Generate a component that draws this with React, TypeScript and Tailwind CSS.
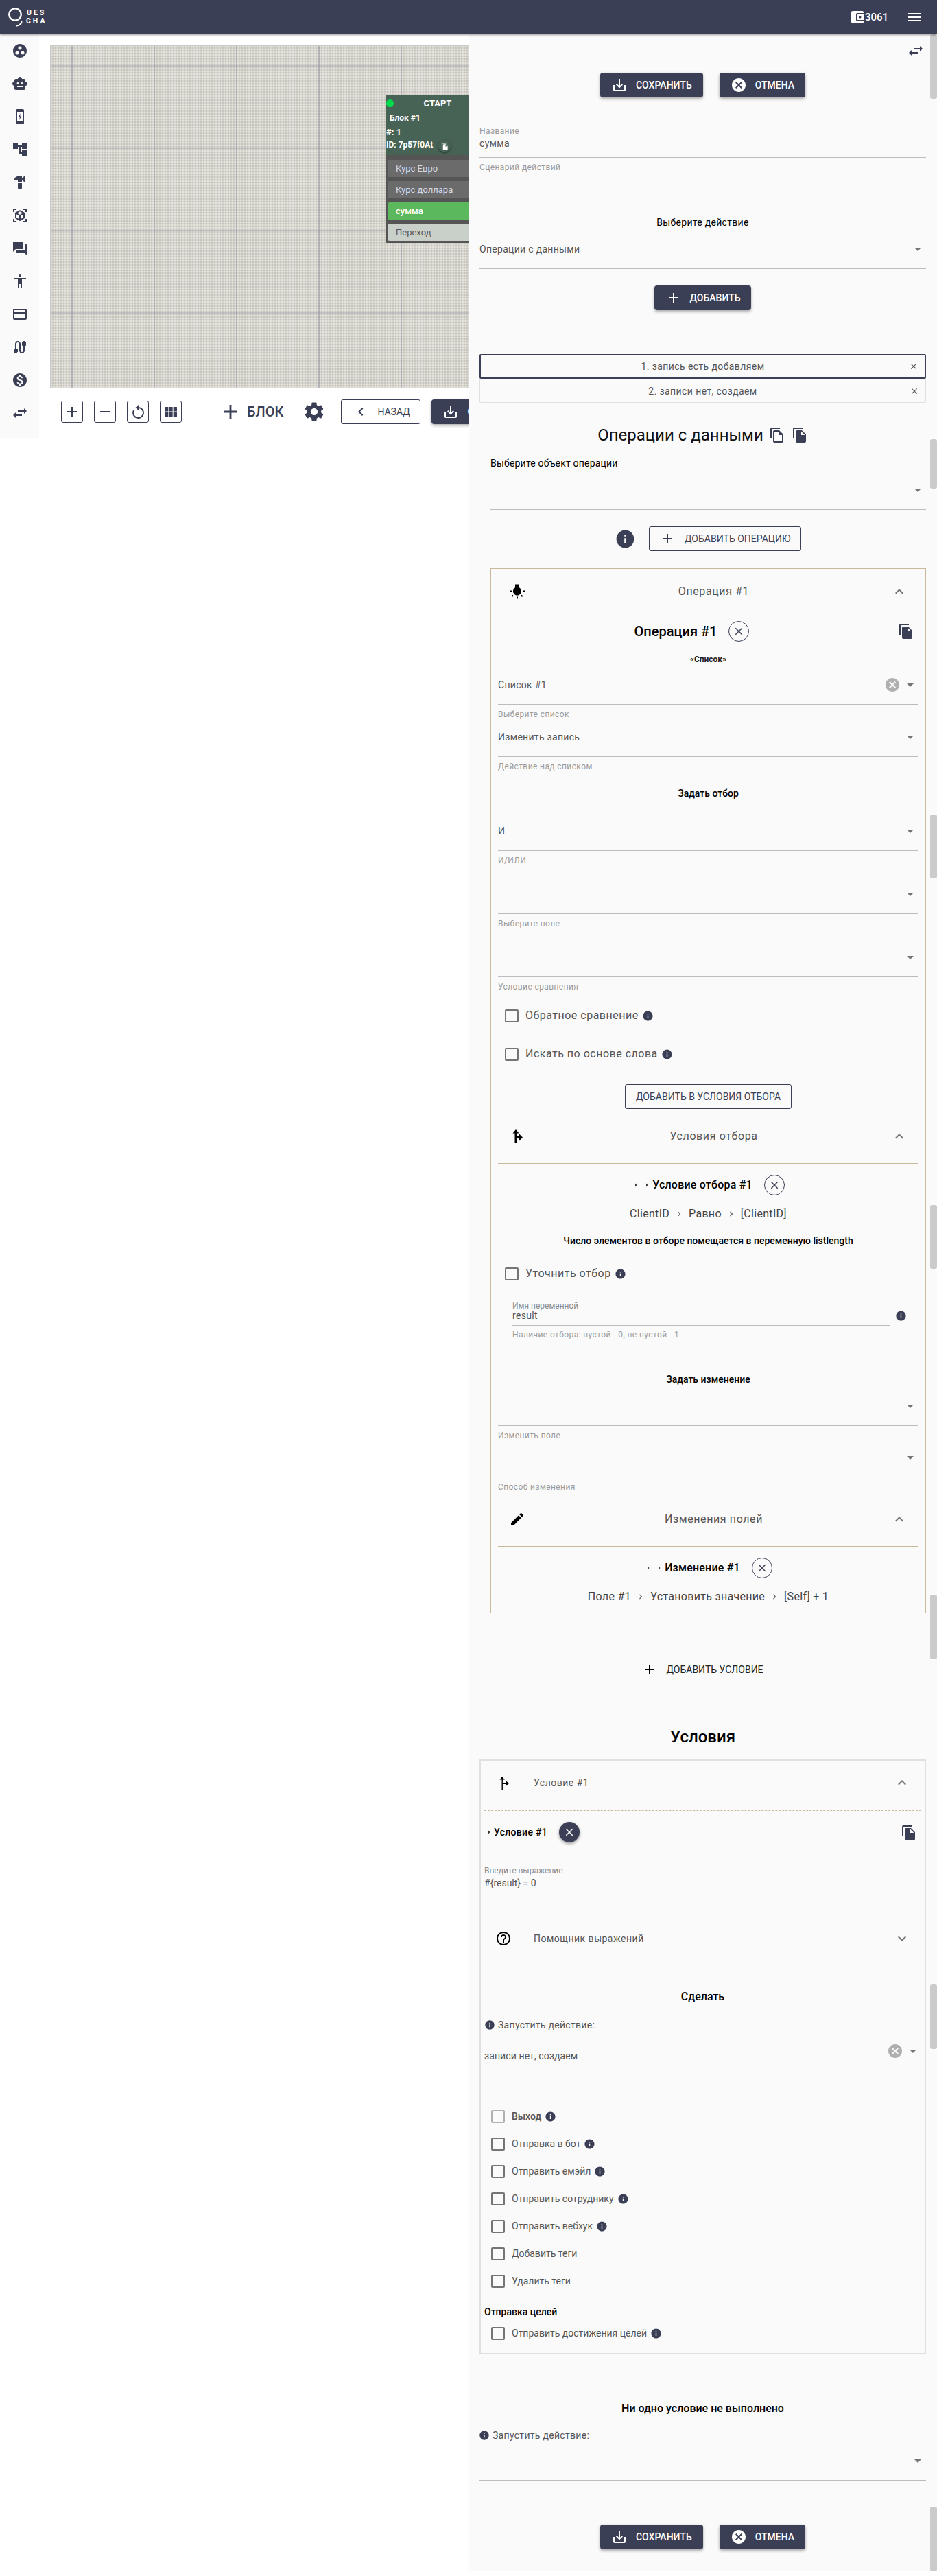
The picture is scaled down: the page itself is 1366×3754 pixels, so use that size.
import React from 'react';
import {
  MdAccessibility, MdAccountBalanceWallet, MdAccountTree, MdAdd, MdArrowDropDown, MdArrowRight, MdCable, MdCancel,
  MdChevronLeft, MdClose, MdCreditCard, MdEdit, MdExpandLess, MdExpandMore, MdFileCopy,
  MdForum, MdGroupWork, MdHardware, MdHelpOutline, MdInfo, MdKeyboardArrowRight, MdMenu, MdMonetizationOn,
  MdOutlineFileCopy, MdRemove, MdSaveAlt, MdSettings, MdSmartToy, MdViewInAr, MdViewModule, MdWbIncandescent
} from 'react-icons/md';

const ChargeIcon = () => (
  <svg width="24" height="24" viewBox="0 0 24 24" fill="#3b3f56">
    <path d="M8 1h8a2 2 0 0 1 2 2v18a2 2 0 0 1-2 2H8a2 2 0 0 1-2-2V3a2 2 0 0 1 2-2z" />
    <rect x="8" y="5" width="8" height="14" fill="#fff" />
    <path d="M12.8 7l-3 5.6h2l-.6 4.4 3-5.8h-2z" />
  </svg>
);

const SwapIcon = () => (
  <svg width="24" height="24" viewBox="0 0 24 24" fill="currentColor">
    <path d="M9 8h9V5l4 4-4 4v-3H9z" />
    <path d="M15 14H6v-3l-4 4 4 4v-3h9z" />
  </svg>
);

const ForkIcon = ({ thin }: { thin?: boolean }) => (
  <svg width="24" height="24" viewBox="0 0 24 24" fill="currentColor">
    <path d={thin ? 'M10 3L6.5 7.5h3V22h1.4v-8H16v2.5l4-3.5-4-3.5V12h-5.1V7.5h3z' : 'M10 2L5.5 7.5h3V22h2.6v-7H15v3.5l5-5-5-5V12h-3.9V7.5h3.4z'} />
  </svg>
);

const RotateIcon = () => (
  <svg width="24" height="24" viewBox="0 0 24 24" fill="none" stroke="currentColor" strokeWidth="2">
    <path d="M12.5 6a7.5 7.5 0 1 1-6.6 4" />
    <path d="M13.5 1.5L8.5 6l5 4.5z" fill="currentColor" stroke="none" />
  </svg>
);

const sideIcons = [
  <MdGroupWork size={24} />, <MdSmartToy size={24} />, <ChargeIcon />, <MdAccountTree size={24} />,
  <MdHardware size={24} />, <MdViewInAr size={24} />, <MdForum size={24} />, <MdAccessibility size={24} />,
  <MdCreditCard size={24} />, <MdCable size={24} />, <MdMonetizationOn size={24} />, <SwapIcon />
];

const Btn = ({ icon, children, cls = '' }: { icon?: React.ReactNode; children: React.ReactNode; cls?: string }) => (
  <button className={`h-9 shrink-0 rounded-[4px] bg-[#3b3f56] text-white flex items-center gap-3 px-4 text-sm font-medium uppercase shadow-[0_2px_4px_rgba(0,0,0,0.35)] ${cls}`}>
    {icon}
    <span>{children}</span>
  </button>
);

const SaveCancel = ({ cls = '' }: { cls?: string }) => (
  <div className={`flex justify-center gap-6 ${cls}`}>
    <Btn icon={<MdSaveAlt size={24} />}>Сохранить</Btn>
    <Btn icon={<MdCancel size={24} />}>Отмена</Btn>
  </div>
);

const Caption = ({ children, cls = '' }: { children: React.ReactNode; cls?: string }) => (
  <div className={`text-xs leading-[14px] tracking-[0.4px] text-[#9a9a9a] ${cls}`}>{children}</div>
);

const Select = ({ value, label, clear, cls = '' }: { value?: string; label?: string; clear?: boolean; cls?: string }) => (
  <div className={cls}>
    <div className="flex items-center h-[39px] pb-[18px] border-b border-[#bdbdbd]">
      <span className="flex-1 text-sm leading-5 tracking-[0.3px] text-[#555]">{value}</span>
      {clear && <MdCancel size={24} className="text-[#b0b0b0] mr-[2px]" />}
      <MdArrowDropDown size={24} className="text-[#757575]" />
    </div>
    {label && <Caption cls="mt-[7px]">{label}</Caption>}
  </div>
);

const Check = ({ label, info, size = 'text-base tracking-[0.5px]', box = 'border-[#757575]', cls = '' }: { label: string; info?: boolean; size?: string; box?: string; cls?: string }) => (
  <div className={`flex items-center h-5 gap-[10px] ${cls}`}>
    <span className={`w-5 h-[19px] shrink-0 border-2 rounded-[2px] ${box}`} />
    <span className={`${size} text-[#555] flex items-center gap-[5px]`}>
      {label}
      {info && <MdInfo size={17} className="text-[#3b3f56]" />}
    </span>
  </div>
);

const Accordion = ({ icon, title, cls = '' }: { icon: React.ReactNode; title: string; cls?: string }) => (
  <div className={`relative flex items-center justify-center ${cls}`}>
    <span className="absolute left-[16px] text-black flex">{icon}</span>
    <span className="text-base tracking-[0.6px] text-[#555] ml-[16px]">{title}</span>
    <MdExpandLess size={24} className="absolute right-[16px] text-[#757575]" />
  </div>
);

const CloseCircle = ({ cls = '' }: { cls?: string }) => (
  <span className={`w-[30px] h-[30px] rounded-full border border-[#3b3f56] flex items-center justify-center text-[#3b3f56] ${cls}`}>
    <MdClose size={18} />
  </span>
);

const Crumbs = ({ items, cls = '' }: { items: string[]; cls?: string }) => (
  <div className={`flex items-center justify-center gap-[7px] text-base leading-6 tracking-[0.3px] text-[#444] ${cls}`}>
    {items.map((t, i) => (
      <React.Fragment key={t}>
        {i > 0 && <MdKeyboardArrowRight size={14} className="text-[#555]" />}
        <span>{t}</span>
      </React.Fragment>
    ))}
  </div>
);

const SubTitle = ({ children, cls = '' }: { children: React.ReactNode; cls?: string }) => (
  <div className={`text-center text-sm leading-5 font-medium text-black ${cls}`}>{children}</div>
);

const Scrollbars = () => (
  <>
    <div className="absolute right-0 top-0 w-[10px] h-[94px] rounded-[3px] bg-[#cbcbcb]" />
    <div className="absolute right-0 top-[590px] w-[10px] h-[72px] rounded-[3px] bg-[#cbcbcb]" />
    <div className="absolute right-0 top-[1137px] w-[10px] h-[93px] rounded-[3px] bg-[#cbcbcb]" />
    <div className="absolute right-0 top-[1706px] w-[10px] h-[93px] rounded-[3px] bg-[#cbcbcb]" />
    <div className="absolute right-0 top-[2274px] w-[10px] h-[94px] rounded-[3px] bg-[#cbcbcb]" />
    <div className="absolute right-0 top-[2842px] w-[10px] h-[94px] rounded-[3px] bg-[#cbcbcb]" />
    <div className="absolute right-0 top-[3603px] w-[10px] h-[94px] rounded-[3px] bg-[#cbcbcb]" />
  </>
);

const FlowNode = () => (
  <div className="absolute left-[488px] top-[71px] w-[152px] bg-[#555] pb-[3px] rounded-t-[3px] text-[12px] font-bold text-white">
    <div className="relative h-[88px] bg-[#476355] rounded-t-[3px]">
      <div className="relative h-[26px] leading-[26px] text-center text-[13px]">
        <span className="absolute left-[1px] top-[7px] w-[11px] h-[11px] rounded-full bg-[#00dc4b]" />
        СТАРТ
      </div>
      <div className="h-4 leading-4 pl-[6px]">Блок #1</div>
      <div className="mt-[5px] h-4 leading-4 pl-[1px] text-[13px]">#: 1</div>
      <div className="mt-[2px] h-4 leading-4 pl-[1px]">ID: 7p57f0At</div>
      <span className="absolute left-[77px] top-[66px] w-[18px] h-[18px] rounded-full bg-[#476355] shadow-[0_1px_3px_rgba(0,0,0,0.5)] flex items-center justify-center">
        <MdFileCopy size={11} />
      </span>
    </div>
    <div className="mt-[7px] ml-[3px] flex flex-col gap-[6px] text-[13px] font-normal">
      <div className="h-[25px] leading-[25px] pl-3 rounded-[3px] bg-[#6b6b6b] text-[#d5d8e6]">Курс Евро</div>
      <div className="h-[25px] leading-[25px] pl-3 rounded-[3px] bg-[#6b6b6b] text-[#d5d8e6]">Курс доллара</div>
      <div className="h-[25px] leading-[25px] pl-3 rounded-[3px] bg-[#5cb85c] text-white font-medium">сумма</div>
      <div className="h-[25px] leading-[25px] pl-3 rounded-[3px] bg-[#c9cfc9] text-[#555]">Переход</div>
    </div>
  </div>
);

const ToolSquare = ({ children }: { children: React.ReactNode }) => (
  <span className="w-8 h-8 shrink-0 rounded-[3px] border border-[#3b3f56] text-[#3b3f56] flex items-center justify-center">{children}</span>
);

const Editor = () => (
  <div className="relative w-[683px] shrink-0 bg-[#fafafa] h-[3697px] pl-4 pr-4 text-[#555]">
    <Scrollbars />
    <div className="pt-[17px] h-[31px] flex justify-end items-center pr-[3px] text-[#3b3f56]">
      <SwapIcon />
    </div>
    <SaveCancel cls="mt-[25px]" />

    <Caption cls="mt-[42px]">Название</Caption>
    <div className="h-[32px] pt-[1px] border-b border-[#bdbdbd] text-sm leading-5 tracking-[0.3px]">сумма</div>
    <Caption cls="mt-[7px]">Сценарий действий</Caption>

    <SubTitle cls="mt-[63px] !font-normal tracking-[0.3px]">Выберите действие</SubTitle>
    <Select cls="mt-[19px]" value="Операции с данными" />
    <div className="mt-6 flex justify-center">
      <Btn icon={<MdAdd size={24} />}>Добавить</Btn>
    </div>

    <div className="mt-16 relative h-9 border-2 border-[#3b3f56] rounded-[2px] flex items-center justify-center text-sm tracking-[0.4px]">
      1. запись есть добавляем
      <MdClose size={14} className="absolute right-[9px]" />
    </div>
    <div className="relative h-[35px] border border-[#e0e0e0] rounded-[2px] flex items-center justify-center text-sm tracking-[0.4px]">
      2. записи нет, создаем
      <MdClose size={14} className="absolute right-[9px]" />
    </div>

    <div className="mt-[31px] h-8 flex items-center justify-center gap-[8px] text-2xl text-[#111]">
      Операции с данными
      <span className="flex gap-[9px] text-[#3b3f56]">
        <MdOutlineFileCopy size={24} />
        <MdFileCopy size={24} />
      </span>
    </div>

    <div className="pl-4">
      <div className="mt-[15px] text-sm leading-5 text-black tracking-[0.2px]">Выберите объект операции</div>
      <Select cls="mt-[19px]" />
      <div className="mt-6 flex items-center justify-center gap-[19px] pr-[1px]">
        <MdInfo size={31} className="text-[#3b3f56]" />
        <button className="h-9 w-[222px] rounded-[3px] border border-[#3b3f56] text-[#3b3f56] text-sm uppercase flex items-center pl-[14px] gap-[13px]">
          <MdAdd size={24} />
          Добавить операцию
        </button>
      </div>

      <div className="mt-[25px] border border-[#c9b99b] px-[10px] pb-[11px]">
        <Accordion cls="h-[66px]" icon={<MdWbIncandescent size={24} />} title="Операция #1" />
        <div className="mt-[10px] relative h-[30px] flex items-center justify-center gap-[17px] pr-[48px]">
          <span className="text-xl font-medium text-black">Операция #1</span>
          <CloseCircle />
          <MdFileCopy size={24} className="absolute right-[6px] text-[#3b3f56]" />
        </div>
        <div className="mt-[18px] text-center text-xs leading-4 font-bold text-[#222]">«Список»</div>
        <Select cls="mt-[19px]" value="Список #1" label="Выберите список" clear />
        <Select cls="mt-[16px]" value="Изменить запись" label="Действие над списком" />
        <SubTitle cls="mt-[22px]">Задать отбор</SubTitle>
        <Select cls="mt-[35px]" value="И" label="И/ИЛИ" />
        <Select cls="mt-[32px]" label="Выберите поле" />
        <Select cls="mt-[32px]" label="Условие сравнения" />
        <Check cls="mt-[25px] ml-[10px]" label="Обратное сравнение" info />
        <Check cls="mt-[36px] ml-[10px]" label="Искать по основе слова" info />
        <div className="mt-[34px] flex justify-center">
          <button className="h-9 w-[243px] rounded-[3px] border border-[#3b3f56] text-[#3b3f56] text-sm uppercase">Добавить в условия отбора</button>
        </div>
        <Accordion cls="h-20 border-b border-[#c9b99b]" icon={<ForkIcon />} title="Условия отбора" />
        <div className="mt-4 h-[30px] flex items-center justify-center">
          <MdArrowRight size={12} className="text-[#333] mr-1" />
          <MdArrowRight size={12} className="text-[#333] mr-[2px]" />
          <span className="text-base font-medium text-black tracking-[0.2px]">Условие отбора #1</span>
          <CloseCircle cls="ml-[17px]" />
        </div>
        <Crumbs cls="mt-[15px]" items={['ClientID', 'Равно', '[ClientID]']} />
        <SubTitle cls="mt-[17px]">Число элементов в отборе помещается в переменную listlength</SubTitle>
        <Check cls="mt-7 ml-[10px]" label="Уточнить отбор" info />
        <div className="mt-[30px] ml-[21px] mr-[17px] relative">
          <div className="text-xs leading-[14px] text-[#8a8a8a]">Имя переменной</div>
          <div className="mr-[24px] pb-[7px] border-b border-[#bdbdbd] text-sm leading-[14px] tracking-[0.3px]">result</div>
          <MdInfo size={17} className="absolute right-0 top-[13px] text-[#3b3f56]" />
          <Caption cls="mt-[6px]">Наличие отбора: пустой - 0, не пустой - 1</Caption>
        </div>
        <SubTitle cls="mt-12">Задать изменение</SubTitle>
        <Select cls="mt-[19px]" label="Изменить поле" />
        <Select cls="mt-[15px]" label="Способ изменения" />
        <Accordion cls="h-20 border-b border-[#c9b99b]" icon={<MdEdit size={24} />} title="Изменения полей" />
        <div className="mt-4 h-[30px] flex items-center justify-center">
          <MdArrowRight size={12} className="text-[#333] mr-1" />
          <MdArrowRight size={12} className="text-[#333] mr-[2px]" />
          <span className="text-base font-medium text-black tracking-[0.2px]">Изменение #1</span>
          <CloseCircle cls="ml-[17px]" />
        </div>
        <Crumbs cls="mt-[15px]" items={['Поле #1', 'Установить значение', '[Self] + 1']} />
      </div>
    </div>

    <div className="mt-16 h-9 flex items-center justify-center gap-[12px] text-sm uppercase text-[#222] pr-[1px]">
      <MdAdd size={24} className="text-black" />
      Добавить условие
    </div>
    <div className="mt-16 h-8 leading-8 text-center text-2xl font-medium text-black">Условия</div>

    <div className="mt-[17px] border-2 border-[#e0e0e0] px-[5px] pb-[19px]">
      <div className="relative h-[73px] pb-2 border-b border-dashed border-[#c9b99b] flex items-center">
        <span className="ml-[16px] text-black flex"><ForkIcon thin /></span>
        <span className="ml-[32px] text-sm tracking-[0.5px] text-[#555]">Условие #1</span>
        <MdExpandLess size={24} className="absolute right-[16px] text-[#757575]" />
      </div>
      <div className="mt-4 relative h-[30px] flex items-center">
        <MdArrowRight size={12} className="text-[#333] ml-[1px] mr-[1px]" />
        <span className="text-sm font-medium text-black tracking-[0.3px]">Условие #1</span>
        <span className="ml-[17px] w-[30px] h-[30px] rounded-full bg-[#3b3f56] text-white flex items-center justify-center shadow-[0_2px_4px_rgba(0,0,0,0.4)]">
          <MdClose size={18} />
        </span>
        <MdFileCopy size={24} className="absolute right-[6px] top-[4px] text-[#3b3f56]" />
      </div>
      <div className="mt-[34px] text-xs leading-[14px] text-[#8a8a8a]">Введите выражение</div>
      <div className="mt-[1px] h-[31px] border-b border-[#bdbdbd] text-sm leading-5">#{'{'}result{'}'} = 0</div>
      <div className="mt-10 relative h-10 flex items-center">
        <MdHelpOutline size={24} className="ml-4 text-black" />
        <span className="ml-[32px] text-sm tracking-[0.5px] text-[#555]">Помощник выражений</span>
        <MdExpandMore size={24} className="absolute right-[16px] text-[#757575]" />
      </div>
      <div className="mt-[53px] text-center text-base leading-6 font-medium text-black">Сделать</div>
      <div className="mt-[19px] flex items-center gap-[4px] text-sm leading-5 tracking-[0.3px] text-[#555]">
        <MdInfo size={16} className="text-[#3b3f56]" />
        Запустить действие:
      </div>
      <div className="h-14 flex items-start border-b border-[#bdbdbd]">
        <span className="flex-1 pt-[25px] text-sm leading-5 tracking-[0.1px]">записи нет, создаем</span>
        <span className="pt-4 flex items-center">
          <MdCancel size={24} className="text-[#b0b0b0] mr-[2px]" />
          <MdArrowDropDown size={24} className="text-[#757575]" />
        </span>
      </div>
      <div className="mt-[57px] ml-[10px] flex flex-col gap-5">
        <Check label="Выход" info size="text-sm font-medium" box="border-[#b0b0b0]" />
        <Check label="Отправка в бот" info size="text-sm" />
        <Check label="Отправить емэйл" info size="text-sm" />
        <Check label="Отправить сотруднику" info size="text-sm" />
        <Check label="Отправить вебхук" info size="text-sm" />
        <Check label="Добавить теги" size="text-sm" />
        <Check label="Удалить теги" size="text-sm" />
      </div>
      <div className="mt-[25px] text-sm leading-5 font-medium text-black">Отправка целей</div>
      <Check cls="mt-[11px] ml-[10px]" label="Отправить достижения целей" info size="text-sm" />
    </div>

    <div className="mt-[67px] text-center text-base leading-6 font-medium text-black">Ни одно условие не выполнено</div>
    <div className="mt-[17px] ml-[-1px] flex items-center gap-[4px] text-sm leading-5 tracking-[0.3px] text-[#555]">
      <MdInfo size={16} className="text-[#3b3f56]" />
      Запустить действие:
    </div>
    <Select cls="mt-[17px]" />
    <SaveCancel cls="mt-16" />
  </div>
);

export default function App() {
  return (
    <div className="w-[1366px] min-h-[3754px] bg-white font-['Roboto',sans-serif]">
      <header className="relative z-10 h-[50px] bg-[#3b3f56] text-white flex items-center shadow-[0_1px_3px_rgba(0,0,0,0.4)]">
        <div className="ml-3 flex items-start">
          <svg width="26" height="30" viewBox="0 0 26 30" fill="none" stroke="#fff" className="-mt-[1px]">
            <circle cx="10" cy="11" r="8.8" strokeWidth="2.4" />
            <path d="M19.5 22c-1 3-3.5 5-7 5.4" strokeWidth="2.2" strokeLinecap="round" />
          </svg>
          <div className="mt-[2px] text-[10.5px] leading-[12px] font-bold tracking-[3px]">
            <div className="pl-[1px]">UES</div>
            <div>CHA</div>
          </div>
        </div>
        <div className="ml-auto flex items-center">
          <MdAccountBalanceWallet size={24} />
          <span className="text-[15px] font-medium -ml-[1px]">3061</span>
          <MdMenu size={24} className="ml-[26px] mr-[21px]" />
        </div>
      </header>
      <div className="flex">
        <nav className="w-[57px] shrink-0 h-[588px] bg-[#fafafa] text-[#3b3f56] flex flex-col items-center">
          {sideIcons.map((icon, i) => (
            <div key={i} className="h-12 flex items-center">{icon}</div>
          ))}
        </nav>
        <main className="w-[626px] shrink-0 h-[588px] overflow-hidden pl-4 pt-4">
          <div className="relative w-[640px] h-[500px] overflow-hidden border border-[#c8c8c8] bg-[#d8d5cd] bg-[image:linear-gradient(90deg,rgba(150,150,165,0.5)_2px,transparent_2px),linear-gradient(0deg,rgba(150,150,165,0.42)_2px,transparent_2px),linear-gradient(90deg,rgba(255,255,255,0.3)_2px,transparent_2px),linear-gradient(0deg,rgba(120,115,110,0.18)_2px,transparent_2px)] bg-[size:120px_120px,120px_120px,4px_4px,4px_4px] bg-[position:30px_30px,30px_30px,0_0,0_0]">
            <FlowNode />
          </div>
          <div className="mt-4 ml-4 h-9 flex items-center w-[600px]">
            <div className="flex gap-4">
              <ToolSquare><MdAdd size={24} /></ToolSquare>
              <ToolSquare><MdRemove size={24} /></ToolSquare>
              <ToolSquare><RotateIcon /></ToolSquare>
              <ToolSquare><MdViewModule size={24} /></ToolSquare>
            </div>
            <MdAdd size={34} className="ml-[54px] text-[#3b3f56] shrink-0" />
            <span className="ml-[7px] text-xl font-medium text-[#3b3f56]">БЛОК</span>
            <MdSettings size={34} className="ml-[28px] text-[#3b3f56] shrink-0" />
            <button className="ml-[22px] shrink-0 w-[116px] h-9 rounded-[3px] border border-[#3b3f56] text-[#3b3f56] text-sm flex items-center pl-[16px] gap-[12px]">
              <MdChevronLeft size={24} />
              НАЗАД
            </button>
            <Btn cls="ml-4" icon={<MdSaveAlt size={24} />}>Сохранить</Btn>
          </div>
        </main>
        <Editor />
      </div>
    </div>
  );
}
